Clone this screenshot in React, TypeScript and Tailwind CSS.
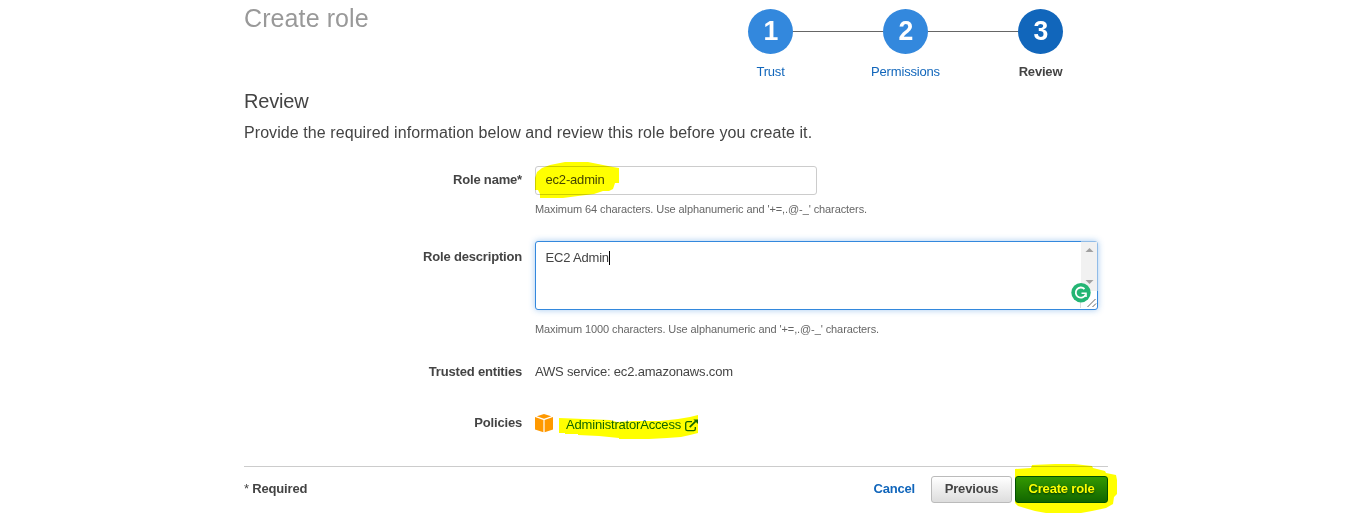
import React from "react";

const steps = [
  { n: 1, label: "Trust", current: false },
  { n: 2, label: "Permissions", current: false },
  { n: 3, label: "Review", current: true },
];

function Stepper() {
  return (
    <ol className="mt-[9px] flex w-[405px]">
      {steps.map((s, i) => (
        <li key={s.n} className="flex w-[135px] flex-col items-center">
          <div className="flex w-full items-center">
            <span className={i === 0 ? "h-px flex-1" : "h-px flex-1 bg-[#666]"} />
            <span
              className={
                s.current
                  ? "flex h-[45px] w-[45px] items-center justify-center rounded-full bg-[#1166bb] text-[28px] font-bold leading-none text-white"
                  : "flex h-[45px] w-[45px] items-center justify-center rounded-full bg-[#3388dd] text-[28px] font-bold leading-none text-white"
              }
            >
              <span className="-mt-px scale-x-95">{s.n}</span>
            </span>
            <span className={i === 2 ? "h-px flex-1" : "h-px flex-1 bg-[#666]"} />
          </div>
          <span className={s.current ? "mt-2 font-bold leading-5" : "mt-2 leading-5 text-[#1166bb]"}>{s.label}</span>
        </li>
      ))}
    </ol>
  );
}

function Row({ label, className, children }: { label: string; className: string; children: React.ReactNode }) {
  return (
    <div className={`flex ${className}`}>
      <div className="w-[278px] shrink-0 text-right font-bold leading-5">{label}</div>
      <div className="ml-[13px] flex-1">{children}</div>
    </div>
  );
}

function BoxIcon() {
  return (
    <svg className="h-[19px] w-[18px]" viewBox="0 0 18 19">
      <path d="M9 0 16.2 2.2 9 4.8 1.8 2.2Z" fill="#ff9900" />
      <path d="M0 3 8.4 6V18.2L0 15.4Z" fill="#ff9900" />
      <path d="M18 3 9.6 6V18.2L18 15.4Z" fill="#ff9900" />
    </svg>
  );
}

function ExternalIcon() {
  return (
    <svg className="h-[13px] w-[13px]" viewBox="0 0 13 13" fill="none" stroke="#1166bb" strokeWidth="1.3">
      <path d="M7 2.7H2.6Q.7 2.7.7 4.4V10Q.7 11.7 2.6 11.7H8.6Q10.3 11.7 10.3 10V8" />
      <path d="M4.7 8.1 10.8 2.1" strokeWidth="1.7" />
      <path d="M8.4.4H13V5Z" fill="#1166bb" stroke="none" />
    </svg>
  );
}

export default function App() {
  return (
    <div className="h-[516px] w-full overflow-hidden bg-white font-['Liberation_Sans',Arial,sans-serif] text-[13px] tracking-[-0.18px] text-[#444]">
      <main className="ml-[244px] w-[864px]">
        <header className="flex h-[89px] justify-between">
          <h1 className="mt-1 text-[25px] leading-7 tracking-[0.1px] text-[#999]">Create role</h1>
          <div className="h-full">
            <Stepper />
          </div>
        </header>
        <h2 className="text-[20px] leading-6">Review</h2>
        <p className="mt-[10px] text-[16px] leading-5 tracking-[0.075px]">
          Provide the required information below and review this role before you create it.
        </p>

        <Row label="Role name*" className="h-[74px] pt-[23px] [&>div:first-child]:pt-[4px]">
          <div className="relative w-[282px]">
            <input
              className="block h-[29px] w-[282px] rounded-[3px] border border-[#ccc] bg-white px-[9.5px] pb-[2px] outline-none"
              defaultValue="ec2-admin"
            />
            <svg className="pointer-events-none absolute -left-px -top-[6px] h-[40px] w-[88px] mix-blend-multiply" viewBox="0 0 88 40">
              <path
                fill="#ffff00"
                d="M1 18 3 12 8 8 16 5 31 2H54L69 5 79 7 85 8V23H81L79 29 75 31H69L60 34 44 36 29 38H6V34L4 30H1Z"
              />
            </svg>
          </div>
          <div className="mt-[6px] text-[11px] leading-4 tracking-[-0.095px] text-[#666]">
            Maximum 64 characters. Use alphanumeric and '+=,.@-_' characters.
          </div>
        </Row>

        <Row label="Role description" className="h-[120px] pt-[24px] [&>div:first-child]:pt-[6px]">
          <div className="relative h-[69px] w-[563px] rounded-[3px] border border-[#3388dd] bg-white pl-[9.5px] pt-[6px] leading-5 shadow-[0_0_6px_rgba(51,136,221,0.45)]">
            <div className="flex items-center">
              <span>EC2 Admin</span>
              <span className="h-[14px] w-px bg-black" />
            </div>
            <svg className="absolute -right-px -top-px h-[69px] w-[28px]" viewBox="0 0 28 69">
              <path d="M11 .5H27.5V50H11Z" fill="#f1f1f1" />
              <path d="M10.5 51V67" stroke="#dcdcdc" />
              <path d="M15.5 11 19.5 7 23.5 11Z" fill="#a0a0a0" />
              <path d="M15.5 39 19.5 43 23.5 39Z" fill="#a0a0a0" />
              <path d="M17.5 66 25.5 58M22.5 66 26 62.5" stroke="#666" />
              <circle cx="11" cy="51.7" r="9.7" fill="#24b574" />
              <path d="M14.5 48A5.1 5.1 0 1 0 15.6 53.5" fill="none" stroke="#fff" strokeWidth="1.8" />
              <path d="M11.5 52.2H16V56" fill="none" stroke="#fff" strokeWidth="1.6" />
            </svg>
          </div>
          <div className="mt-[11px] text-[11px] leading-4 tracking-[-0.095px] text-[#666]">
            Maximum 1000 characters. Use alphanumeric and '+=,.@-_' characters.
          </div>
        </Row>

        <Row label="Trusted entities" className="h-[51px] pt-[25px]">
          <div className="leading-5">AWS service: ec2.amazonaws.com</div>
        </Row>

        <Row label="Policies" className="h-[78px] pt-[25px]">
          <div className="relative -mt-px flex h-[22px] items-center">
            <BoxIcon />
            <span className="ml-[13px] mt-[4px] leading-5 text-[#1166bb]">AdministratorAccess</span>
            <span className="ml-[4px] mt-[5px]">
              <ExternalIcon />
            </span>
            <svg className="pointer-events-none absolute left-[24px] top-[2px] h-[26px] w-[142px] mix-blend-multiply" viewBox="0 0 142 26">
              <path
                fill="#ffff00"
                d="M0 4 25 5 51 6 58 8 75 7 101 7 119 5 131 3 139 1V19L131 21 122 23 108 24 90 25H60V24L40 22 19 21V20L6 20V19H0Z"
              />
            </svg>
          </div>
        </Row>

        <footer className="flex h-[50px] border-t border-[#ccc] pt-[9px]">
          <div className="mt-[3px] flex-1 font-bold leading-5">
            <span className="font-normal">*</span> Required
          </div>
          <a className="mr-[16px] mt-[3px] font-bold leading-5 text-[#1166bb]">Cancel</a>
          <button className="h-[27px] w-[81px] rounded-[3px] border border-[#bbb] bg-linear-to-b from-white to-[#dddddd] pb-px font-bold leading-5">
            Previous
          </button>
          <div className="relative ml-[3px]">
            <button className="block h-[27px] w-[93px] rounded-[3px] border border-[#005000] bg-linear-to-b from-[#339900] to-[#116600] pb-px font-bold leading-5 text-white [text-shadow:0_1px_2px_#003300]">
              Create role
            </button>
            <svg className="pointer-events-none absolute left-0 -top-[13px] h-[54px] w-[106px] mix-blend-multiply" viewBox="0 0 106 54">
              <path
                fill="#ffff00"
                d="M0 6 16 5 17 2 40 1H59L77 3 78 5 90 8 91 10 101 12 102 17V31L99 34 98 41 91 45 77 48 66 50H31L20 48 13 46 3 43 0 40Z"
              />
            </svg>
          </div>
        </footer>
      </main>
    </div>
  );
}
